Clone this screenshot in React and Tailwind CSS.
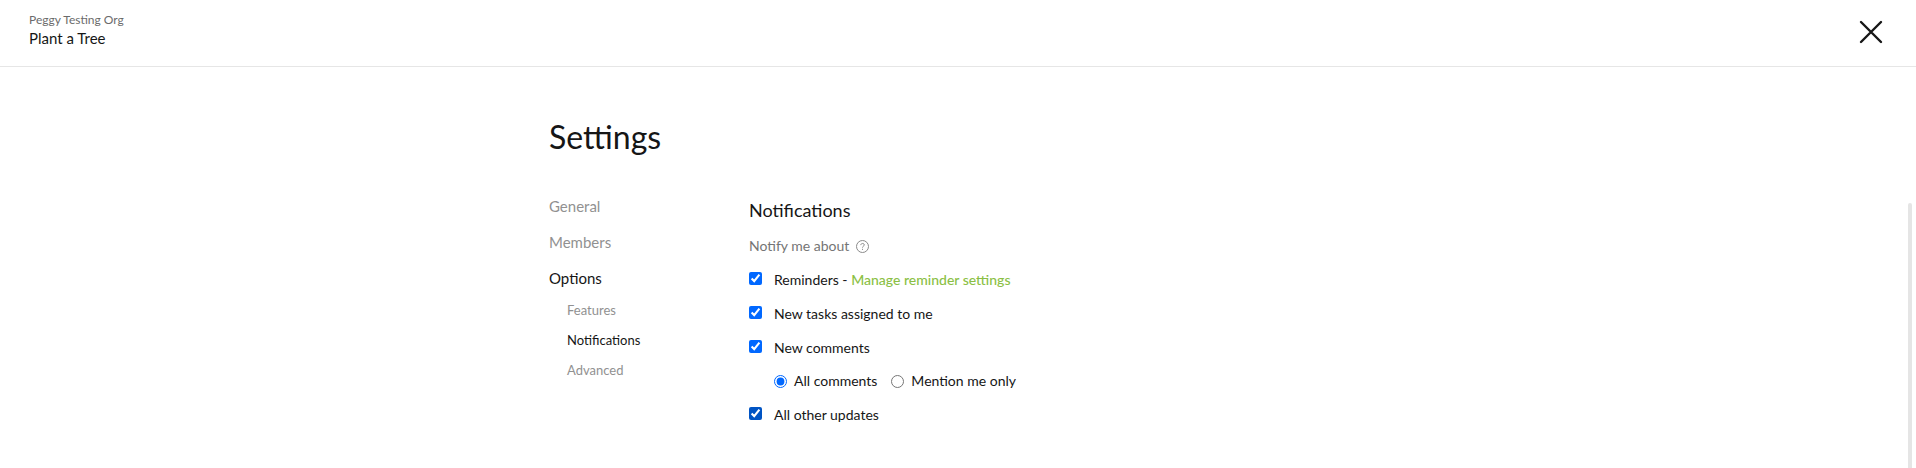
const sections = ["General", "Members"];

function Check({ id, label, accent = "accent-[#0168ff]", children }) {
  return (
    <div className="flex h-[34px] items-start">
      <input id={id} type="checkbox" defaultChecked className={`mt-[7px] size-[13px] shrink-0 ${accent}`} />
      <div className="ml-3 pt-[5px] leading-5">
        <label htmlFor={id}>{label}</label>
        {children}
      </div>
    </div>
  );
}

function Choice({ id, label, defaultChecked }) {
  return (
    <div className="flex items-center gap-[7px]">
      <input id={id} type="radio" name="comments" defaultChecked={defaultChecked} className="size-[13px] accent-[#0168ff]" />
      <label htmlFor={id} className="leading-5">{label}</label>
    </div>
  );
}

export default function App() {
  return (
    <div className="flex min-h-screen flex-col bg-white font-['Lato',sans-serif] text-[#161616]">
      <header className="flex items-start justify-between border-b border-[#e6e6e6] px-[29px] pt-3 pb-[18px]">
        <div>
          <p className="text-xs leading-4 text-[#6b6b6b]">Peggy Testing Org</p>
          <p className="text-[15px] leading-5">Plant a Tree</p>
        </div>
        <button type="button" aria-label="Close" className="mt-2 mr-1 flex size-6 items-center justify-center">
          <svg viewBox="0 0 24 24" className="size-6" fill="none" stroke="#161616" strokeWidth="2.4" strokeLinecap="round">
            <path d="M2 2 22 22M22 2 2 22" />
          </svg>
        </button>
      </header>

      <div className="flex flex-1 flex-col">
        <div className="mx-auto w-full max-w-[818px] pt-[50px]">
          <h1 className="text-[32px] leading-10">Settings</h1>
        </div>
        <div className="mt-[39px] flex flex-1 pr-1 pl-2">
          <main className="mx-auto flex w-full max-w-[818px]">
            <nav aria-label="Settings" className="w-[200px] shrink-0 text-[15px] text-[#919191]">
              <ul>
                {sections.map((name) => (
                  <li key={name} className="h-9 leading-5"><a href="#">{name}</a></li>
                ))}
                <li className="leading-5">
                  <a href="#" className="text-[#161616]">Options</a>
                  <ul className="mt-[7px] ml-[18px] text-[13px] leading-[30px]">
                    <li><a href="#">Features</a></li>
                    <li><a href="#" className="text-[#161616]">Notifications</a></li>
                    <li><a href="#">Advanced</a></li>
                  </ul>
                </li>
              </ul>
            </nav>
            <form className="text-sm">
              <h2 className="text-lg leading-7">Notifications</h2>
              <div className="mt-3 mb-[9px] flex items-center gap-[7px] text-[#757575]">
                <span className="leading-5">Notify me about</span>
                <button type="button" aria-label="Help">
                  <svg viewBox="0 0 13 13" className="size-[13px]" fill="none" stroke="#8a8a8a">
                    <circle cx="6.5" cy="6.5" r="6" />
                    <path d="M4.8 5.1c0-2.2 3.5-2.1 3.5-.2 0 1.2-1.8 1.3-1.8 2.7M6.5 8.8v1.1" />
                  </svg>
                </button>
              </div>
              <Check id="reminders" label="Reminders - ">
                <a href="#" className="font-medium text-[#8bbf45]">Manage reminder settings</a>
              </Check>
              <Check id="tasks" label="New tasks assigned to me" />
              <Check id="new-comments" label="New comments" />
              <div className="ml-[25px] flex h-[33px] items-start gap-[14px] pt-1">
                <Choice id="all-comments" label="All comments" defaultChecked />
                <Choice id="mentions" label="Mention me only" />
              </div>
              <Check id="updates" label="All other updates" accent="accent-[#0054c4]" />
            </form>
          </main>
          <div aria-hidden="true" className="mt-[7px] w-1 rounded-t bg-[#e5e5e5]" />
        </div>
      </div>
    </div>
  );
}
